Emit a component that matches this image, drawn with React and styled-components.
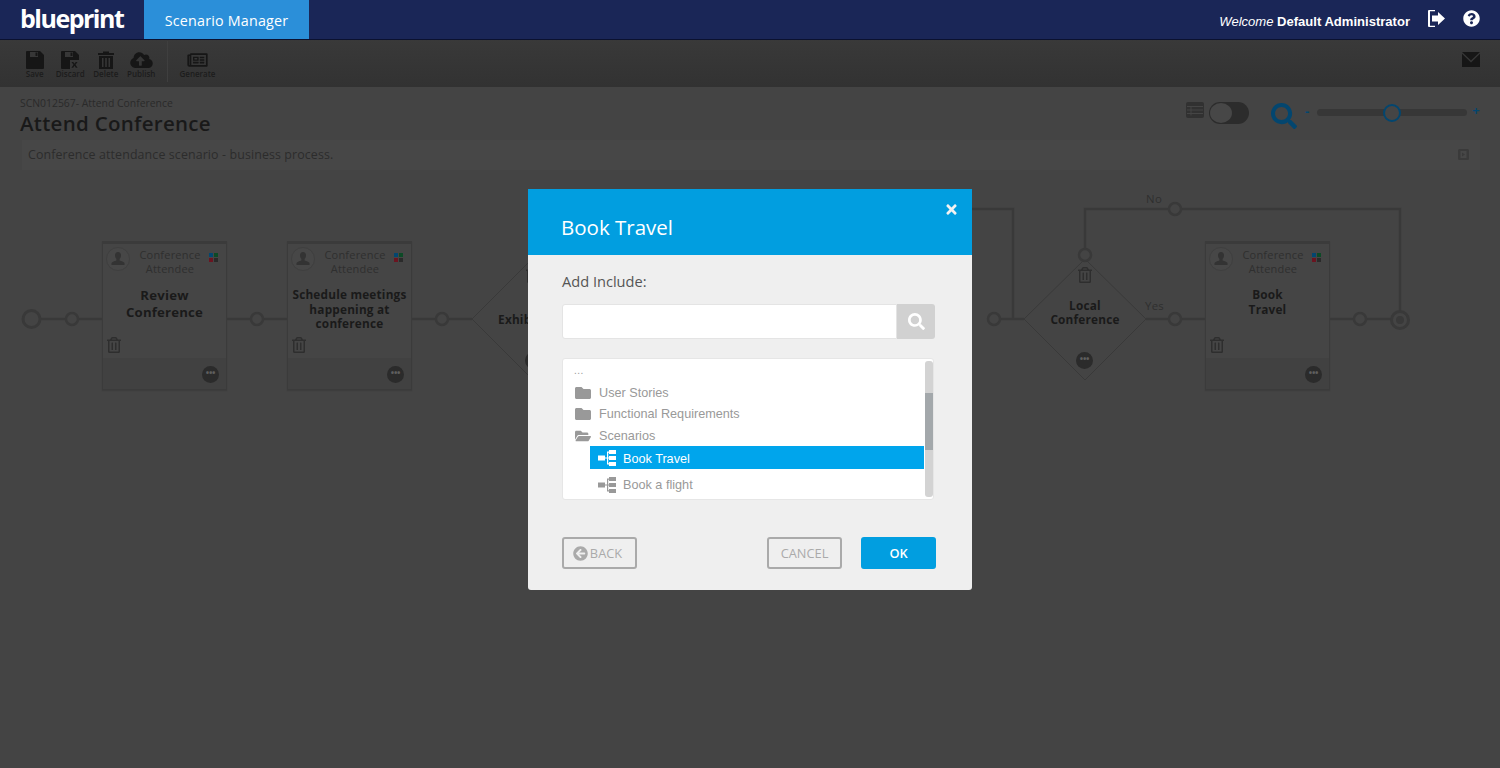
import React from "react";
import styled, { createGlobalStyle } from "styled-components";
import {
  FaCloudUploadAlt,
  FaFolder,
  FaFolderOpen,
  FaRegNewspaper,
  FaRegTrashAlt,
  FaQuestionCircle,
  FaSearch,
  FaArrowCircleLeft,
  FaTimes,
} from "react-icons/fa";

const GlobalStyle = createGlobalStyle`
  html, body { margin: 0; padding: 0; height: 100%; background: #444; overflow: hidden; }
  body { font-family: "Open Sans", "Liberation Sans", sans-serif; }
  * { box-sizing: border-box; }
`;

const Page = styled.div`
  width: 1500px;
  height: 768px;
  background: #444;
  overflow: hidden;
`;

/* top nav */
const NavBar = styled.header`
  height: 40px;
  background: #1a2657;
  border-bottom: 1px solid #0b1130;
  display: flex;
  align-items: stretch;
  padding-left: 20px;
`;
const Logo = styled.div`
  width: 124px;
  color: #fff;
  font: 700 25px/37px "Open Sans", sans-serif;
  letter-spacing: -1.5px;
`;
const ActiveTab = styled.div`
  width: 165px;
  background: #2b8fd9;
  color: #fff;
  font-size: 14.3px;
  letter-spacing: 0.2px;
  line-height: 42px;
  text-align: center;
`;
const NavRight = styled.div`
  margin-left: auto;
  display: flex;
  align-items: center;
  padding-right: 20px;
  color: #fff;
  font: 13.05px "Liberation Sans", Arial, sans-serif;
`;
const Welcome = styled.span`
  font-weight: 700;
  margin: 3px 18px 0 0;
  em { font-weight: 400; font-style: italic; }
`;
const NavIcon = styled.span`
  display: flex;
  margin-left: ${(p) => p.$gap || 0}px;
  margin-top: -2px;
`;

/* toolbar */
const Toolbar = styled.div`
  height: 47px;
  background: linear-gradient(#393939, #323232);
  display: flex;
  align-items: stretch;
  padding: 1px 20px 0 17px;
`;
const Tool = styled.div`
  width: ${(p) => p.$w || 35.5}px;
  display: flex;
  flex-direction: column;
  align-items: center;
  padding-top: 10px;
  color: #161616;
  svg { display: block; height: 18px; }
`;
const ToolLabel = styled.span`
  font-size: 8px;
  font-weight: 600;
  line-height: 9px;
  margin-top: 0;
  color: #1c1c1c;
`;
const ToolDivider = styled.div`
  width: 1px;
  background: #3f3f3f;
  margin-left: 8px;
  margin-bottom: 5px;
`;
const MailIcon = styled.div`
  margin-left: auto;
  padding-top: 11px;
  svg { display: block; }
`;

/* scenario header */
const ScenarioHead = styled.div`
  height: 93px;
  padding: 10px 20px 0;
`;
const HeadRow = styled.div`
  display: flex;
  justify-content: space-between;
  height: 44px;
`;
const Crumb = styled.div`
  font-size: 10.4px;
  line-height: 12px;
  color: #2a2a2a;
`;
const Title = styled.h1`
  margin: 0;
  font-size: 20.5px;
  font-weight: 600;
  line-height: 28px;
  letter-spacing: 0.28px;
  color: #191919;
`;
const Controls = styled.div`
  display: flex;
  align-items: flex-start;
  padding-top: 5px;
  margin-right: -5px;
`;
const Toggle = styled.div`
  width: 40px;
  height: 22px;
  margin: 0 0 0 5px;
  border-radius: 11px;
  background: #2c2c2c;
  padding: 1px;
`;
const ToggleKnob = styled.div`
  width: 22px;
  height: 20px;
  border-radius: 50%;
  background: #474747;
`;
const ZoomIcon = styled.div`
  margin: 1px 0 0 22px;
  color: #03466f;
  display: flex;
`;
const ZoomSign = styled.span`
  width: ${(p) => p.$w}px;
  margin-top: ${(p) => p.$top}px;
  text-align: center;
  color: #03466f;
  font-size: 13px;
  font-weight: 700;
  line-height: 14px;
`;
const SliderTrack = styled.div`
  position: relative;
  width: 150px;
  height: 7px;
  margin-top: 7px;
  border-radius: 4px;
  background: #373737;
`;
const SliderThumb = styled.div`
  position: absolute;
  left: 66px;
  top: -5px;
  width: 18px;
  height: 18px;
  border-radius: 50%;
  border: 2px solid #03466f;
  background: #454545;
`;
const DescBar = styled.div`
  display: flex;
  align-items: center;
  justify-content: space-between;
  height: 30px;
  margin: -1px 0 0 2px;
  padding: 0 11px 2px 6px;
  background: #474747;
  color: #2c2c2c;
  font-size: 12.4px;
  letter-spacing: 0.12px;
`;

/* diagram, nodes sit at their own place on the canvas */
const Diagram = styled.div`
  position: relative;
  height: 588px;
`;
const Wires = styled.svg`
  position: absolute;
  left: 0;
  top: 0;
`;
const Card = styled.div`
  position: absolute;
  left: ${(p) => p.$x}px;
  top: 61px;
  width: 125px;
  height: 149px;
  display: flex;
  flex-direction: column;
  background: #454545;
  border: 1px solid #3b3b3b;
  border-top-width: 3px;
  box-shadow: 0 1px 1px #3d3d3d;
`;
const CardHead = styled.div`
  display: flex;
  height: 40px;
  padding: 3px 8px 0 3px;
`;
const Avatar = styled.div`
  width: 24px;
  height: 24px;
  border-radius: 50%;
  border: 1px solid #3f3f3f;
  background: #474747;
  display: flex;
  align-items: center;
  justify-content: center;
  flex: none;
`;
const Role = styled.div`
  flex: 1;
  text-align: center;
  font-size: 11px;
  line-height: 14px;
  color: #2f2f2f;
  letter-spacing: 0.2px;
  padding: 1px 0 0 4px;
`;
const Swatch = styled.div`
  display: grid;
  grid-template-columns: 4px 4px;
  grid-auto-rows: 4px;
  gap: 1px;
  margin: 6px 0 0 3px;
  height: 9px;
  flex: none;
`;
const Dot = styled.i`
  display: block;
  background: ${(p) => p.$c};
`;
const CardTitle = styled.div`
  flex: 1;
  padding: ${(p) => (p.$big ? "3px 0 0" : "3px 2px 0")};
  text-align: center;
  font-size: ${(p) => (p.$big ? 13.2 : 11.8)}px;
  line-height: ${(p) => (p.$big ? 17 : 14.5)}px;
  font-weight: 700;
  letter-spacing: 0.2px;
  color: #1a1a1a;
`;
const CardTrash = styled.div`
  height: 21px;
  padding-left: 3px;
  color: #2e2e2e;
  svg { display: block; }
`;
const CardFoot = styled.div`
  height: 31px;
  background: #414141;
  display: flex;
  align-items: center;
  justify-content: flex-end;
  padding: 2px 7px 0 0;
`;
const MoreBtn = styled.div`
  width: 17px;
  height: 17px;
  border-radius: 50%;
  background: #2b2b2b;
  color: #5f5f5f;
  font-size: 9px;
  font-weight: 700;
  line-height: 13px;
  text-align: center;
  letter-spacing: -0.3px;
`;
const DiamondText = styled.div`
  position: absolute;
  left: ${(p) => p.$x - 60}px;
  top: ${(p) => p.$y}px;
  width: 120px;
  text-align: center;
  font-size: 11.8px;
  line-height: 14px;
  font-weight: 700;
  letter-spacing: 0.2px;
  color: #1a1a1a;
`;
const DiamondBit = styled.div`
  position: absolute;
  left: ${(p) => p.$x}px;
  top: ${(p) => p.$y}px;
  color: #2e2e2e;
  svg { display: block; }
`;
const EdgeLabel = styled.span`
  position: absolute;
  left: ${(p) => p.$x}px;
  top: ${(p) => p.$y}px;
  font-size: 11.4px;
  line-height: 14px;
  letter-spacing: 0.3px;
  color: #2f2f2f;
`;

/* modal */
const Backdrop = styled.div`
  position: fixed;
  inset: 0;
  display: flex;
  justify-content: center;
  align-items: flex-start;
  padding-top: 189px;
`;
const Modal = styled.div`
  position: relative;
  width: 444px;
  height: 401px;
  background: #efefef;
  border-radius: 0 0 3px 3px;
`;
const ModalHead = styled.div`
  height: 66px;
  background: #019ee0;
  color: #fff;
  font-size: 20.5px;
  line-height: 27px;
  padding: 25px 33px 0;
`;
const CloseBtn = styled.div`
  position: absolute;
  right: 13px;
  top: 13px;
  color: #f2f2f2;
  display: flex;
`;
const ModalBody = styled.div`
  padding: 16px 38px 0 34px;
`;
const FieldLabel = styled.div`
  font-size: 14.6px;
  line-height: 20px;
  color: #555;
`;
const SearchRow = styled.div`
  display: flex;
  height: 35px;
  margin-top: 13px;
  margin-right: -1px;
`;
const SearchInput = styled.div`
  flex: 1;
  background: #fff;
  border: 1px solid #e4e4e4;
  border-radius: 3px 0 0 3px;
`;
const SearchBtn = styled.div`
  width: 38px;
  background: #d1d1d1;
  border-radius: 0 3px 3px 0;
  color: #fff;
  display: flex;
  align-items: center;
  justify-content: center;
`;
const TreePanel = styled.div`
  display: flex;
  height: 142px;
  margin-top: 19px;
  background: #fff;
  border: 1px solid #e6e6e6;
  border-radius: 3px;
  font: 12.67px "Liberation Sans", Arial, sans-serif;
  color: #999;
`;
const TreeList = styled.div`
  flex: 1;
  padding-top: 1px;
`;
const TreeDots = styled.div`
  height: 22px;
  padding: 4px 0 0 11px;
  line-height: 14px;
  font-size: 10px;
  letter-spacing: 0.5px;
`;
const FolderRow = styled.div`
  display: flex;
  align-items: center;
  height: ${(p) => p.$h || 21}px;
  padding: ${(p) => (p.$h ? "1px" : 0)} 0 0 12px;
  color: #999;
  svg { flex: none; margin-right: 8px; color: #999; }
`;
const LeafRow = styled.div`
  display: flex;
  align-items: center;
  height: 23px;
  margin: ${(p) => (p.$selected ? 0 : "4px")} 0 0 27px;
  padding: ${(p) => (p.$selected ? 2 : 1)}px 0 0 8px;
  background: ${(p) => (p.$selected ? "#00a5ec" : "transparent")};
  color: ${(p) => (p.$selected ? "#fff" : "#999")};
  svg { flex: none; margin: -1px 7px 0 0; }
`;
const ScrollTrack = styled.div`
  width: 8px;
  margin: 2px 0 2px 1px;
  border-radius: 3px;
  background: #d3d3d3;
  padding-top: 32px;
  flex: none;
`;
const ScrollThumb = styled.div`
  height: 57px;
  background: #a3a8ab;
`;
const ModalFoot = styled.div`
  display: flex;
  margin-top: 37px;
  margin-right: -2px;
  gap: 19px;
`;
const Btn = styled.div`
  width: 75px;
  height: 32px;
  display: flex;
  align-items: center;
  justify-content: center;
  gap: 2px;
  margin-left: ${(p) => p.$left || 0};
  padding-right: ${(p) => p.$nudge || 0}px;
  border: 2px solid ${(p) => (p.$primary ? "#019ee0" : "#aaa")};
  border-radius: 3px;
  background: ${(p) => (p.$primary ? "#019ee0" : "transparent")};
  color: ${(p) => (p.$primary ? "#fff" : "#aaa")};
  font-size: 12.8px;
  font-weight: ${(p) => (p.$primary ? 600 : 400)};
`;

/* drawn icons */
const FloppyIcon = ({ cross }) => (
  <svg width="18" height="18" viewBox="0 0 18 18" fill="currentColor">
    <path fillRule="evenodd" d="M1 0h13l4 4v13a1 1 0 0 1-1 1H1a1 1 0 0 1-1-1V1a1 1 0 0 1 1-1zM4 1v5h8V1zM9.500 1.500h2v3.500h-2z" />
    {cross && (
      <g>
        <rect x="9" y="9" width="9" height="9" fill="#363636" />
        <path d="M10.500 11h1.800l1.200 1.800 1.200-1.800h1.800l-2 2.800 2.100 3h-1.800l-1.300-2-1.300 2h-1.800l2.100-3z" />
      </g>
    )}
  </svg>
);

const TrashSolid = () => (
  <svg width="16" height="18" viewBox="0 0 16 18" fill="currentColor">
    <path fillRule="evenodd" d="M0 2h5V.5h6V2h5v2H0zM1 5h14v13H1zM4 7v9h1.500V7zM7.200 7v9h1.600V7zM10.500 7v9H12V7z" />
  </svg>
);

const MailGlyph = () => (
  <svg width="18" height="15" viewBox="0 0 18 15" fill="#161616">
    <path d="M0 0h18L9 8.500z" />
    <path d="M0 1.800V15h18V1.800L9 10.400z" />
  </svg>
);

const SignOutIcon = () => (
  <svg width="17" height="17" viewBox="0 0 17 17" fill="#fff">
    <path d="M1 0h6v1.200H2v14.600h5V17H1a1 1 0 0 1-1-1V1a1 1 0 0 1 1-1z" />
    <path d="M4 5.500h6V2l7 6.500L10 15v-3.500H4z" />
  </svg>
);

const TableIcon = () => (
  <svg width="18" height="16" viewBox="0 0 18 16">
    <rect width="18" height="16" rx="2" fill="#313131" />
    <path d="M1 4.500h16M1 8h16M1 11.500h16M5 4.500v9" stroke="#454545" strokeWidth="1" />
  </svg>
);

const ExpandIcon = () => (
  <svg width="11" height="11" viewBox="0 0 11 11">
    <rect width="11" height="11" rx="1.500" fill="#3a3a3a" />
    <rect x="2.500" y="2" width="6" height="7" fill="#474747" />
    <path d="M4 3.500l3 2-3 2z" fill="#3a3a3a" />
  </svg>
);

const HierarchyIcon = () => (
  <svg width="18" height="16" viewBox="0 0 18 16" fill="currentColor">
    <rect x="0" y="5.500" width="7" height="5" />
    <path d="M7 7.500h2V1.500h2v1.200H10.200v4.800H11v1H10.200v4.800H11v1.200H9V8.500H7z" />
    <rect x="11" y="0" width="7" height="4" />
    <rect x="11" y="6" width="7" height="4" />
    <rect x="11" y="12" width="7" height="4" />
  </svg>
);

const PersonIcon = () => (
  <svg width="14" height="14" viewBox="0 0 14 14" fill="#333">
    <path d="M7 0c2 0 3 1.500 3 3.500 0 1.400-.6 2.800-1.400 3.500v1.400c1.800.7 4.400 1.200 4.900 2.600V13H.5v-2c.5-1.400 3.100-1.900 4.900-2.600V7C4.600 6.300 4 4.900 4 3.500 4 1.500 5 0 7 0z" />
  </svg>
);

const WIRE = "#393939";

const stations = [
  [72, 139], [257, 139], [442, 139], [994, 139],
  [1175, 139], [1360, 139], [1175, 29], [1085, 75],
];

const Wiring = () => (
  <Wires width="1500" height="588" fill="none">
    <path d="M40 139H472M1000 139H1024M1146 139H1400M1085 75V29H1400V139M972 29H1013V139M533 29H972" stroke={WIRE} strokeWidth="2.500" />
    <path d="M472 139L533 78L594 139L533 200Z" fill="#444" stroke={WIRE} strokeWidth="1" />
    <path d="M1024 139L1085 79L1146 139L1085 200Z" fill="#444" stroke={WIRE} strokeWidth="1" />
    <circle cx="31.500" cy="139" r="8.500" fill="#444" stroke={WIRE} strokeWidth="3" />
    {stations.map(([cx, cy]) => (
      <circle key={`${cx}-${cy}`} cx={cx} cy={cy} r="6" fill="#444" stroke={WIRE} strokeWidth="2.500" />
    ))}
    <circle cx="1400" cy="140" r="8.500" fill="#444" stroke={WIRE} strokeWidth="3" />
    <circle cx="1400" cy="140" r="4" fill={WIRE} />
  </Wires>
);

const cards = [
  { x: 102, title: ["Review", "Conference"], big: true },
  { x: 287, title: ["Schedule meetings", "happening at", "conference"] },
  { x: 1205, title: ["Book", "Travel"] },
];

const ProcessCard = ({ x, title, big }) => (
  <Card $x={x}>
    <CardHead>
      <Avatar><PersonIcon /></Avatar>
      <Role>Conference Attendee</Role>
      <Swatch>
        <Dot $c="#03466f" />
        <Dot $c="#0c4a26" />
        <Dot $c="#6a1420" />
        <Dot $c="#2a2a2a" />
      </Swatch>
    </CardHead>
    <CardTitle $big={big}>
      {title.map((line) => (
        <div key={line}>{line}</div>
      ))}
    </CardTitle>
    <CardTrash><FaRegTrashAlt size={16} /></CardTrash>
    <CardFoot><MoreBtn>•••</MoreBtn></CardFoot>
  </Card>
);

export default function App() {
  return (
    <Page>
      <GlobalStyle />
      <NavBar>
        <Logo>blueprint</Logo>
        <ActiveTab>Scenario Manager</ActiveTab>
        <NavRight>
          <Welcome><em>Welcome</em> Default Administrator</Welcome>
          <NavIcon><SignOutIcon /></NavIcon>
          <NavIcon $gap={18}><FaQuestionCircle size={17} /></NavIcon>
        </NavRight>
      </NavBar>

      <Toolbar>
        <Tool><FloppyIcon /><ToolLabel>Save</ToolLabel></Tool>
        <Tool><FloppyIcon cross /><ToolLabel>Discard</ToolLabel></Tool>
        <Tool><TrashSolid /><ToolLabel>Delete</ToolLabel></Tool>
        <Tool><FaCloudUploadAlt size={23} /><ToolLabel>Publish</ToolLabel></Tool>
        <ToolDivider />
        <Tool $w={59}><FaRegNewspaper size={21} /><ToolLabel>Generate</ToolLabel></Tool>
        <MailIcon><MailGlyph /></MailIcon>
      </Toolbar>

      <ScenarioHead>
        <HeadRow>
          <div>
            <Crumb>SCN012567- Attend Conference</Crumb>
            <Title>Attend Conference</Title>
          </div>
          <Controls>
            <TableIcon />
            <Toggle><ToggleKnob /></Toggle>
            <ZoomIcon><FaSearch size={26} /></ZoomIcon>
            <ZoomSign $w={20} $top={2}>-</ZoomSign>
            <SliderTrack><SliderThumb /></SliderTrack>
            <ZoomSign $w={18} $top={1}>+</ZoomSign>
          </Controls>
        </HeadRow>
        <DescBar>
          Conference attendance scenario - business process.
          <ExpandIcon />
        </DescBar>
      </ScenarioHead>

      <Diagram>
        <Wiring />
        {cards.map((c) => (
          <ProcessCard key={c.x} {...c} />
        ))}
        <DiamondText $x={533} $y={132}>Exhibit Hall</DiamondText>
        <DiamondBit $x={525} $y={87}><FaRegTrashAlt size={16} /></DiamondBit>
        <DiamondBit $x={525} $y={172}><MoreBtn>•••</MoreBtn></DiamondBit>
        <DiamondText $x={1085} $y={118}>Local<br />Conference</DiamondText>
        <DiamondBit $x={1077} $y={87}><FaRegTrashAlt size={16} /></DiamondBit>
        <DiamondBit $x={1076} $y={172}><MoreBtn>•••</MoreBtn></DiamondBit>
        <EdgeLabel $x={1146} $y={12}>No</EdgeLabel>
        <EdgeLabel $x={1145} $y={119}>Yes</EdgeLabel>
      </Diagram>

      <Backdrop>
        <Modal>
          <ModalHead>Book Travel</ModalHead>
          <CloseBtn><FaTimes size={15} /></CloseBtn>
          <ModalBody>
            <FieldLabel>Add Include:</FieldLabel>
            <SearchRow>
              <SearchInput />
              <SearchBtn><FaSearch size={17} /></SearchBtn>
            </SearchRow>
            <TreePanel>
              <TreeList>
                <TreeDots>...</TreeDots>
                <FolderRow><FaFolder size={16} />User Stories</FolderRow>
                <FolderRow><FaFolder size={16} />Functional Requirements</FolderRow>
                <FolderRow $h={22}><FaFolderOpen size={16} />Scenarios</FolderRow>
                <LeafRow $selected><HierarchyIcon />Book Travel</LeafRow>
                <LeafRow><HierarchyIcon />Book a flight</LeafRow>
              </TreeList>
              <ScrollTrack><ScrollThumb /></ScrollTrack>
            </TreePanel>
            <ModalFoot>
              <Btn $nudge={4}><FaArrowCircleLeft size={15} />BACK</Btn>
              <Btn $left="auto">CANCEL</Btn>
              <Btn $primary>OK</Btn>
            </ModalFoot>
          </ModalBody>
        </Modal>
      </Backdrop>
    </Page>
  );
}
